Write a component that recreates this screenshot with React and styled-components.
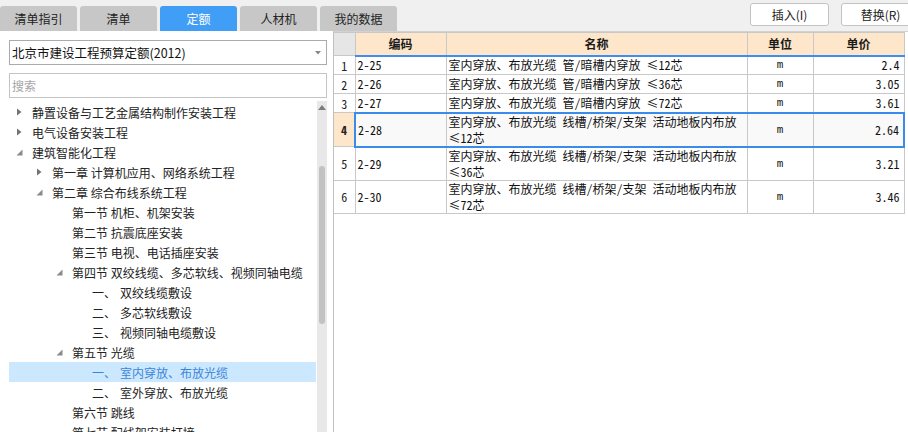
import React from "react";
import styled, { createGlobalStyle, css } from "styled-components";

const GlobalStyle = createGlobalStyle`
  html, body {
    margin: 0;
    padding: 0;
    width: 908px;
    height: 432px;
    overflow: hidden;
    background: #fff;
  }
  body {
    font-family: "Noto Sans CJK SC", "Microsoft YaHei", sans-serif;
    font-size: 12px;
    color: #222;
  }
  * { box-sizing: border-box; }
`;

const Page = styled.div`
  width: 908px;
  height: 432px;
  display: flex;
  flex-direction: column;
  overflow: hidden;
`;

const TopBar = styled.div`
  height: 31px;
  flex: none;
  background: #f0f0f0;
  display: flex;
  align-items: flex-end;
`;

const Tabs = styled.div`
  display: flex;
  gap: 3px;
  align-items: flex-end;
`;

const Tab = styled.div`
  width: 77px;
  height: 25px;
  border-radius: 3px 3px 0 0;
  background: ${(p) => (p.$active ? "#419ef7" : "#c7c7c7")};
  color: ${(p) => (p.$active ? "#fff" : "#222")};
  font-size: 12px;
  display: flex;
  align-items: center;
  justify-content: center;
`;

const Actions = styled.div`
  margin-left: auto;
  margin-right: -12px;
  align-self: flex-start;
  display: flex;
  gap: 12px;
  padding-top: 3px;
`;

const ActionButton = styled.button`
  width: 79px;
  height: 23px;
  border: 1px solid #c3c3c3;
  border-radius: 3px;
  background: #fff;
  font: 12px "Noto Sans CJK SC", sans-serif;
  color: #222;
  padding: 0;
`;

const Body = styled.div`
  flex: 1;
  display: flex;
  min-height: 0;
`;

const LeftPanel = styled.div`
  width: 333px;
  flex: none;
  padding: 9px 6px 0 9px;
  display: flex;
  flex-direction: column;
  background: #fff;
`;

const Select = styled.div`
  height: 25px;
  flex: none;
  border: 1px solid #ababab;
  display: flex;
  align-items: center;
  justify-content: space-between;
  padding: 0 5px 0 2px;
  font-size: 12.5px;
  color: #111;
`;

const SearchInput = styled.input`
  margin-top: 8px;
  height: 25px;
  flex: none;
  border: 1px solid #c4c4c4;
  padding: 0 2px;
  font: 12px "Noto Sans CJK SC", sans-serif;
  outline: none;
  &::placeholder {
    color: #a6a6a6;
  }
`;

const TreeArea = styled.div`
  margin-top: 3px;
  flex: 1;
  display: flex;
  min-height: 0;
  overflow: hidden;
`;

const TreeList = styled.div`
  flex: 1;
  padding-top: 1px;
  padding-right: 1px;
  overflow: hidden;
`;

const TreeRow = styled.div`
  height: 20px;
  display: flex;
  align-items: center;
  padding-left: ${(p) => p.$level * 20}px;
  font-size: 12px;
  white-space: nowrap;
  color: ${(p) => (p.$selected ? "#3d85d8" : "#222")};
  background: ${(p) => (p.$selected ? "#cce8ff" : "transparent")};
`;

const ArrowBox = styled.span`
  width: 23px;
  flex: none;
  display: flex;
  align-items: center;
  padding-left: ${(p) => (p.$open ? 7 : 8)}px;
`;

const Prefix = styled.span`
  margin-right: 4px;
`;

const Scrollbar = styled.div`
  width: 10px;
  flex: none;
  background: #e8e8e8;
  display: flex;
  flex-direction: column;
  align-items: center;
`;

const ScrollArrow = styled.svg`
  margin-top: 4px;
  flex: none;
`;

const Thumb = styled.div`
  width: 6px;
  height: 158px;
  margin-top: 56px;
  border-radius: 3px;
  background: #c2c2c2;
`;

const RightPanel = styled.div`
  flex: 1;
  border-left: 1px solid #c0c0c0;
  border-top: 1px solid #d2d2d2;
  background: #fff;
  padding-right: 3px;
`;

const Table = styled.table`
  border-collapse: collapse;
  table-layout: fixed;
  width: 570px;
  font-family: "Noto Sans Mono CJK SC", "Noto Sans CJK SC", sans-serif;
  font-size: 12px;
  color: #111;
`;

const HeadCell = styled.th`
  height: 23px;
  padding: 0;
  font-size: 12px;
  font-weight: bold;
  color: #1a1a1a;
  text-align: center;
  border: 1px solid #c8c8c8;
  background: ${(p) => (p.$corner ? "#e6e6e6" : "#fde6c9")};
  border-bottom: ${(p) => (p.$corner ? "1px solid #c8c8c8" : "2px solid #3d8ef0")};
  ${(p) => p.$corner && css`border-left: none;`}
`;

const Row = styled.tr`
  height: ${(p) => (p.$tall ? 33 : 19)}px;
`;

const NumCell = styled.td`
  border: 1px solid #c8c8c8;
  border-left: none;
  text-align: center;
  padding: 0;
  color: #222;
  background: ${(p) => (p.$selected ? "#fde6c9" : "#fff")};
  font-weight: ${(p) => (p.$selected ? "bold" : "normal")};
`;

const Cell = styled.td`
  border: 1px solid #c8c8c8;
  padding: 0 ${(p) => (p.$align === "right" ? 4 : 2)}px 0 2px;
  line-height: 16px;
  vertical-align: middle;
  color: #111;
  text-align: ${(p) => p.$align || "left"};
  background: ${(p) => (p.$selected ? "#f9f9f9" : "#fff")};
  ${(p) =>
    p.$unit &&
    css`
      font-family: "Liberation Mono", monospace;
      font-size: 11px;
    `}
  ${(p) =>
    p.$selected &&
    css`
      border-top: 2px solid #3b8beb;
      border-bottom: 2px solid #3b8beb;
    `}
  ${(p) => p.$selected && p.$first && css`border-left: 2px solid #3b8beb;`}
  ${(p) => p.$selected && p.$last && css`border-right: 2px solid #3b8beb;`}
`;

const Collapsed = () => (
  <svg width="5" height="8" viewBox="0 0 5 8">
    <path d="M0 0.5 L4.5 4 L0 7.5 Z" fill="#737373" />
  </svg>
);

const Expanded = () => (
  <svg width="7" height="8" viewBox="0 0 7 8">
    <path d="M6.5 1.5 L6.5 7.5 L0.5 7.5 Z" fill="#8a8a8a" />
  </svg>
);

const tree = [
  { level: 0, arrow: "closed", text: "静置设备与工艺金属结构制作安装工程" },
  { level: 0, arrow: "closed", text: "电气设备安装工程" },
  { level: 0, arrow: "open", text: "建筑智能化工程" },
  { level: 1, arrow: "closed", text: "第一章 计算机应用、网络系统工程" },
  { level: 1, arrow: "open", text: "第二章 综合布线系统工程" },
  { level: 2, text: "第一节 机柜、机架安装" },
  { level: 2, text: "第二节 抗震底座安装" },
  { level: 2, text: "第三节 电视、电话插座安装" },
  { level: 2, arrow: "open", text: "第四节 双绞线缆、多芯软线、视频同轴电缆" },
  { level: 3, prefix: "一、", text: "双绞线缆敷设" },
  { level: 3, prefix: "二、", text: "多芯软线敷设" },
  { level: 3, prefix: "三、", text: "视频同轴电缆敷设" },
  { level: 2, arrow: "open", text: "第五节 光缆" },
  { level: 3, prefix: "一、", text: "室内穿放、布放光缆", selected: true },
  { level: 3, prefix: "二、", text: "室外穿放、布放光缆" },
  { level: 2, text: "第六节 跳线" },
  { level: 2, text: "第七节 配线架安装打接" },
];

const rows = [
  { code: "2-25", name: ["室内穿放、布放光缆 管/暗槽内穿放 ≤12芯"], unit: "m", price: "2.4" },
  { code: "2-26", name: ["室内穿放、布放光缆 管/暗槽内穿放 ≤36芯"], unit: "m", price: "3.05" },
  { code: "2-27", name: ["室内穿放、布放光缆 管/暗槽内穿放 ≤72芯"], unit: "m", price: "3.61" },
  { code: "2-28", name: ["室内穿放、布放光缆 线槽/桥架/支架 活动地板内布放", "≤12芯"], unit: "m", price: "2.64", selected: true },
  { code: "2-29", name: ["室内穿放、布放光缆 线槽/桥架/支架 活动地板内布放", "≤36芯"], unit: "m", price: "3.21" },
  { code: "2-30", name: ["室内穿放、布放光缆 线槽/桥架/支架 活动地板内布放", "≤72芯"], unit: "m", price: "3.46" },
];

const tabs = ["清单指引", "清单", "定额", "人材机", "我的数据"];

export default function App() {
  return (
    <Page>
      <GlobalStyle />
      <TopBar>
        <Tabs>
          {tabs.map((t) => (
            <Tab key={t} $active={t === "定额"}>
              {t}
            </Tab>
          ))}
        </Tabs>
        <Actions>
          <ActionButton>插入(I)</ActionButton>
          <ActionButton>替换(R)</ActionButton>
        </Actions>
      </TopBar>
      <Body>
        <LeftPanel>
          <Select>
            <span>北京市建设工程预算定额(2012)</span>
            <svg width="6" height="4" viewBox="0 0 6 4">
              <path d="M0 0 L6 0 L3 3.5 Z" fill="#888" />
            </svg>
          </Select>
          <SearchInput placeholder="搜索" />
          <TreeArea>
            <TreeList>
              {tree.map((n, i) => (
                <TreeRow key={i} $level={n.level} $selected={n.selected}>
                  <ArrowBox $open={n.arrow === "open"}>
                    {n.arrow === "closed" && <Collapsed />}
                    {n.arrow === "open" && <Expanded />}
                  </ArrowBox>
                  {n.prefix && <Prefix>{n.prefix}</Prefix>}
                  <span>{n.text}</span>
                </TreeRow>
              ))}
            </TreeList>
            <Scrollbar>
              <ScrollArrow width="8" height="5" viewBox="0 0 8 5">
                <path d="M4 0 L8 5 L0 5 Z" fill="#7d7d7d" />
              </ScrollArrow>
              <Thumb />
            </Scrollbar>
          </TreeArea>
        </LeftPanel>
        <RightPanel>
          <Table>
            <colgroup>
              <col style={{ width: 21 }} />
              <col style={{ width: 91 }} />
              <col style={{ width: 301 }} />
              <col style={{ width: 66 }} />
              <col style={{ width: 91 }} />
            </colgroup>
            <thead>
              <tr>
                <HeadCell $corner />
                <HeadCell>编码</HeadCell>
                <HeadCell>名称</HeadCell>
                <HeadCell>单位</HeadCell>
                <HeadCell>单价</HeadCell>
              </tr>
            </thead>
            <tbody>
              {rows.map((r, i) => (
                <Row key={r.code} $tall={r.name.length > 1}>
                  <NumCell $selected={r.selected}>{i + 1}</NumCell>
                  <Cell $selected={r.selected} $first>
                    {r.code}
                  </Cell>
                  <Cell $selected={r.selected}>
                    {r.name.map((line, k) => (
                      <React.Fragment key={k}>
                        {k > 0 && <br />}
                        {line}
                      </React.Fragment>
                    ))}
                  </Cell>
                  <Cell $selected={r.selected} $align="center" $unit>
                    {r.unit}
                  </Cell>
                  <Cell $selected={r.selected} $align="right" $last>
                    {r.price}
                  </Cell>
                </Row>
              ))}
            </tbody>
          </Table>
        </RightPanel>
      </Body>
    </Page>
  );
}
